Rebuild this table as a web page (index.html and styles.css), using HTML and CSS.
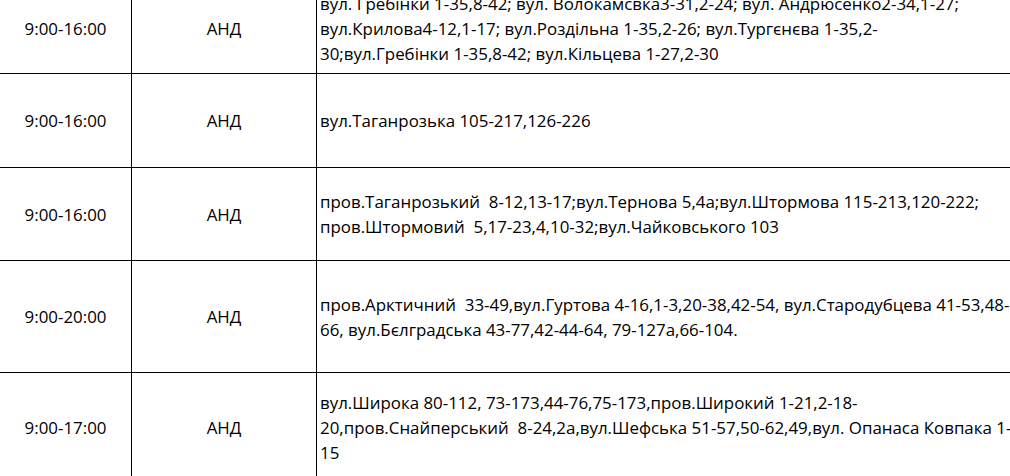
FILE: index.html
```html
<!DOCTYPE html>
<html lang="uk">
<head>
<meta charset="utf-8">
<title>Графік відключень</title>
<link rel="stylesheet" href="styles.css">
</head>
<body>
<table class="sched">
  <colgroup>
    <col class="c-time">
    <col class="c-org">
    <col class="c-addr">
  </colgroup>
  <tr class="r1">
    <td class="time">9:00-16:00</td>
    <td class="org">АНД</td>
    <td class="addr">вул. Гребінки 1-35,8-42; вул. Волокамсвка3-31,2-24; вул. Андрюсенко2-34,1-27;<br>вул.Крилова4-12,1-17; вул.Роздільна 1-35,2-26; вул.Тургєнєва 1-35,2-<br>30;вул.Гребінки 1-35,8-42; вул.Кільцева 1-27,2-30</td>
  </tr>
  <tr class="r2">
    <td class="time">9:00-16:00</td>
    <td class="org">АНД</td>
    <td class="addr">вул.Таганрозька 105-217,126-226</td>
  </tr>
  <tr class="r3">
    <td class="time">9:00-16:00</td>
    <td class="org">АНД</td>
    <td class="addr">пров.Таганрозький&nbsp; 8-12,13-17;вул.Тернова 5,4а;вул.Штормова 115-213,120-222;<br>пров.Штормовий&nbsp; 5,17-23,4,10-32;вул.Чайковського 103</td>
  </tr>
  <tr class="r4">
    <td class="time">9:00-20:00</td>
    <td class="org">АНД</td>
    <td class="addr">пров.Арктичний&nbsp; 33-49,вул.Гуртова 4-16,1-3,20-38,42-54, вул.Стародубцева 41-53,48-<br>66, вул.Бєлградська 43-77,42-44-64, 79-127а,66-104.</td>
  </tr>
  <tr class="r5">
    <td class="time">9:00-17:00</td>
    <td class="org">АНД</td>
    <td class="addr">вул.Широка 80-112, 73-173,44-76,75-173,пров.Широкий 1-21,2-18-<br>20,пров.Снайперський&nbsp; 8-24,2а,вул.Шефська 51-57,50-62,49,вул. Опанаса Ковпака 1-<br>15</td>
  </tr>
</table>
</body>
</html>
```
FILE: styles.css
```css
html, body {
  margin: 0;
  padding: 0;
  background: #fff;
  overflow: hidden;
}
body {
  width: 1010px;
  height: 476px;
  font-family: "Open Sans", "Noto Sans", sans-serif;
  font-size: 16.9px;
  color: #000;
}
.sched {
  border-collapse: collapse;
  table-layout: fixed;
  width: 1200px;
  margin: -18px 0 0 -1px;
}
.c-time { width: 132px; }
.c-org { width: 185px; }
.c-addr { width: 883px; }
.sched td {
  border: 1px solid #000;
  padding: 0 3px;
  line-height: 25px;
  vertical-align: middle;
  white-space: nowrap;
  overflow: hidden;
}
.sched .time, .sched .org { text-align: center; }
.sched .addr { text-align: left; }
.r1 { height: 91px; }
.r2 { height: 94px; }
.r3 { height: 93px; }
.r4 { height: 112px; }
.r5 { height: 110px; }
```
